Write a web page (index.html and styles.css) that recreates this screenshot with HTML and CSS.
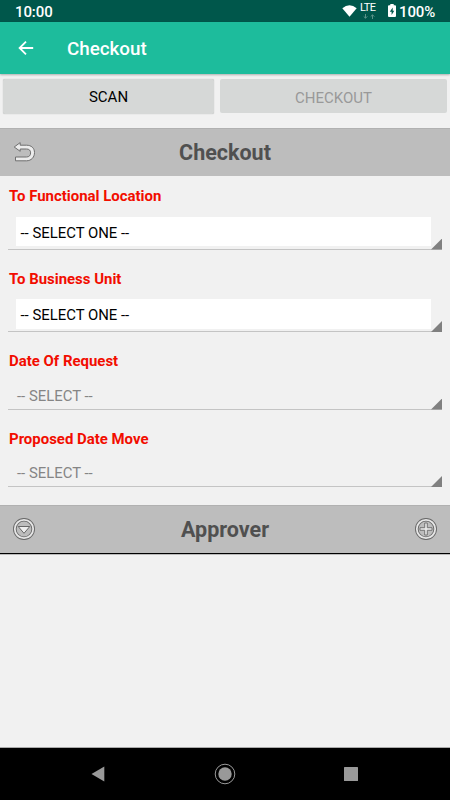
FILE: index.html
```
<!DOCTYPE html>
<html lang="en">
<head>
<meta charset="utf-8">
<title>Checkout</title>
<link rel="stylesheet" href="styles.css">
</head>
<body>
<div class="screen">
  <div class="status">
    <span class="clock">10:00</span>
    <svg class="wifi" width="15" height="12" viewBox="0 0 15 12"><path d="M.3 3.2Q7.5-2.6 14.7 3.2L7.5 11.8Z" fill="#fff"/></svg>
    <span class="lte"><span class="lte-text">LTE</span><svg width="12" height="5" viewBox="0 0 12 5"><path d="M2.5 0V4.2M.7 2.4L2.5 4.2 4.3 2.4M9.5 5V.8M7.7 2.6L9.5.8 11.3 2.6" fill="none" stroke="#5b9389" stroke-width="1"/></svg></span>
    <svg class="battery" width="8" height="13" viewBox="0 0 8 13"><path d="M2.3 0H5.7V1.3H7Q8 1.3 8 2.3V12Q8 13 7 13H1Q0 13 0 12V2.3Q0 1.3 1 1.3H2.3Z" fill="#fff"/><path d="M4.7 3.5L1.8 7.8H3.6V11L6.3 6.7H4.7Z" fill="#00574b"/></svg>
    <span class="percent">100%</span>
  </div>
  <header class="appbar">
    <svg width="16" height="16" viewBox="0 0 16 16"><path d="M15.2 8H2M8 1.6L1.6 8 8 14.4" fill="none" stroke="#fff" stroke-width="1.8"/></svg>
    <h1>Checkout</h1>
  </header>
  <div class="actions">
    <button class="scan">SCAN</button>
    <button class="checkout" disabled>CHECKOUT</button>
  </div>
  <div class="section">
    <svg width="24" height="24" viewBox="0 0 24 24"><path d="M2.2 7L8.2 2.6V5.2H14.5C19.3 5.2 22.5 8 22.5 12.6S19.3 20.8 14.5 20.8H3.5V17H14.5C17.1 17 18.6 15.5 18.6 12.9S17.1 9 14.5 9H8.2V11.3Z" fill="#ececec" stroke="#6f6f6f" stroke-width="1" stroke-linejoin="round"/></svg>
    <h2>Checkout</h2>
    <span class="spacer"></span>
  </div>
  <main class="form">
    <div class="field tall"><label>To Functional Location</label><div class="select"><div class="value">-- SELECT ONE --</div></div></div>
    <div class="field tall"><label>To Business Unit</label><div class="select"><div class="value">-- SELECT ONE --</div></div></div>
    <div class="field"><label>Date Of Request</label><div class="select date"><div class="value">-- SELECT --</div></div></div>
    <div class="field"><label>Proposed Date Move</label><div class="select date"><div class="value">-- SELECT --</div></div></div>
  </main>
  <div class="section approver">
    <svg width="24" height="24" viewBox="0 0 24 24"><circle cx="12" cy="12" r="9.2" fill="none" stroke="#686868" stroke-width="3.6"/><circle cx="12" cy="12" r="9.2" fill="none" stroke="#e6e6e6" stroke-width="1.8"/><path d="M6.2 9.5H17.8L12 16.3Z" fill="#eee" stroke="#686868" stroke-width="1"/></svg>
    <h2>Approver</h2>
    <svg width="24" height="24" viewBox="0 0 24 24"><circle cx="12" cy="12" r="9.2" fill="none" stroke="#686868" stroke-width="3.6"/><circle cx="12" cy="12" r="9.2" fill="none" stroke="#e6e6e6" stroke-width="1.8"/><path d="M10.7 6H13.3V10.7H18V13.3H13.3V18H10.7V13.3H6V10.7H10.7Z" fill="#e6e6e6" stroke="#6c6c6c" stroke-width=".9"/></svg>
  </div>
  <div class="blank"></div>
  <nav class="nav">
    <svg width="14" height="16" viewBox="0 0 14 16"><path d="M.5 8L13.3.6V15.4Z" fill="#999"/></svg>
    <svg width="22" height="22" viewBox="0 0 22 22"><circle cx="11" cy="11" r="9.8" fill="none" stroke="#999"/><circle cx="11" cy="11" r="6.7" fill="#999"/></svg>
    <svg width="14" height="14" viewBox="0 0 14 14"><rect width="14" height="14" rx=".5" fill="#999"/></svg>
  </nav>
</div>
</body>
</html>
```
FILE: styles.css
```
* { box-sizing: border-box; }
body { margin: 0; background: #f1f1f1; font-family: Roboto, "Liberation Sans", sans-serif; }
svg { display: block; flex: none; }
h1, h2 { margin: 0; }
.screen { display: flex; flex-direction: column; width: 450px; height: 800px; overflow: hidden; }
.status { display: flex; flex: none; align-items: center; height: 22px; padding: 2px 14px 0 15px; background: #00574b; color: #fff; font-size: 15px; font-weight: 500; line-height: 20px; }
.clock { margin-right: auto; letter-spacing: -.1px; }
.wifi { margin: -2px 3px 0 0; }
.lte { width: 16px; height: 17px; margin: -3px 12px 0 0; }
.lte-text { display: block; font-size: 11px; line-height: 12px; font-weight: 400; letter-spacing: -.6px; }
.lte svg { margin-left: 3px; }
.battery { margin: -3px 3px 0 0; }
.percent { width: 37px; white-space: nowrap; letter-spacing: -.1px; }
.appbar { display: flex; flex: none; align-items: center; gap: 33px; height: 52px; padding: 2px 18px 0; background: #1dbc9c; color: #fff; box-shadow: 0 1px 2px rgba(0, 0, 0, .28); position: relative; }
.appbar svg { margin-top: -3px; }
.appbar h1 { font-size: 18.8px; line-height: 24px; font-weight: 500; }
.actions { display: flex; flex: none; gap: 6px; height: 54px; padding: 5px 3px 0; }
button { height: 35px; padding: 1px 0 0; border: 0; border-radius: 2px; background: #d6d8d7; font: 400 15px/35px Roboto, sans-serif; color: #000; box-shadow: 0 0 1px rgba(0, 0, 0, .3); }
.scan { width: 211px; }
.checkout { width: 227px; height: 34px; padding-top: 2px; color: #999; box-shadow: none; }
.section { display: flex; flex: none; align-items: center; justify-content: space-between; height: 48px; padding: 0 12px; background: #bdbdbd; border-top: 1px solid #b1b1b1; color: #505050; }
.section h2 { font-size: 21.5px; line-height: 28px; font-weight: 700; }
.section svg { margin-top: -1px; }
.spacer { width: 24px; }
.form { flex: none; height: 329px; padding: 0 8px; }
.field { height: 77.5px; padding-top: 10px; }
.tall { height: 82.5px; }
label { display: block; padding-left: 1px; color: #f20d00; font-size: 14.95px; line-height: 20px; font-weight: 700; }
.select { position: relative; height: 43.5px; padding: 10.5px 11.5px 0 8px; border-bottom: 1px solid #c4c4c4; }
.select::after { content: ""; position: absolute; right: 0; bottom: -1px; width: 11px; height: 11px; background: #808080; clip-path: polygon(100% 0, 100% 100%, 0 100%); }
.value { height: 29.5px; padding-left: 4.5px; background: #fff; color: #000; font-size: 14.9px; line-height: 32px; }
.date { height: 38.5px; }
.date .value { padding-left: 1px; margin-top: -2px; background: none; color: #858585; }
.approver { height: 49px; border-bottom: 1px solid #000; }
.blank { flex: 1; border-top: 1px solid #bbb; }
.nav { display: flex; flex: none; align-items: center; justify-content: space-between; height: 53px; padding: 0 92px 0 91px; border-top: 1px solid #aaa; background: #000; }
```
